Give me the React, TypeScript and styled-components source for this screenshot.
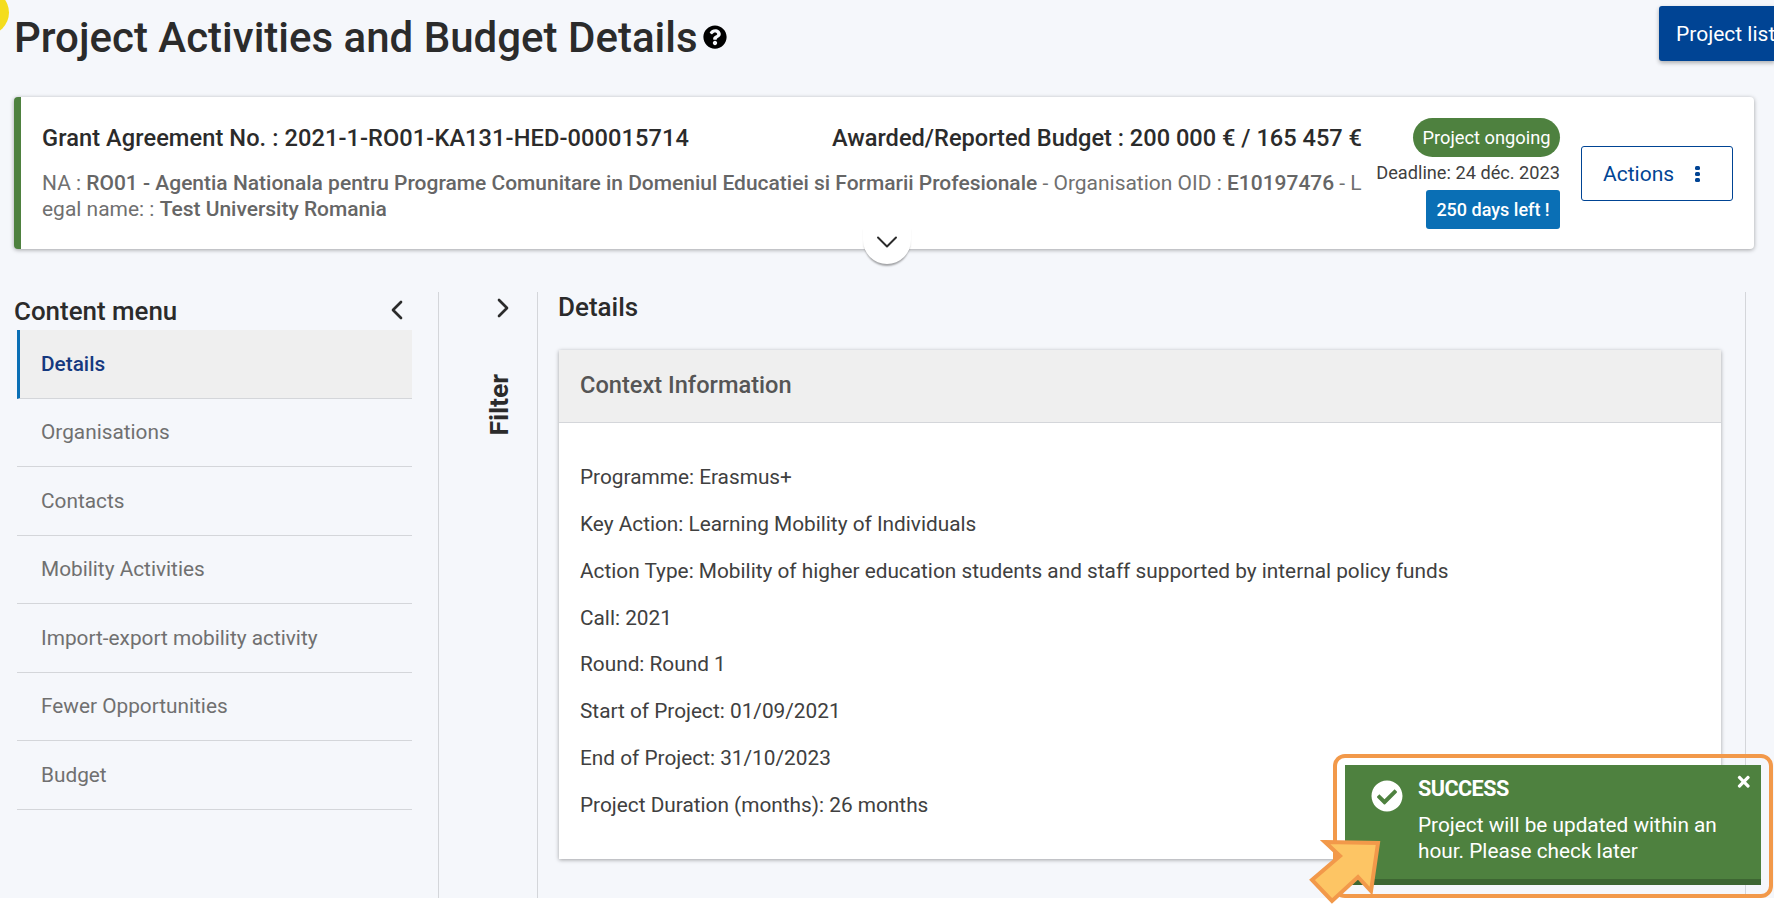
import styled, { createGlobalStyle } from "styled-components";
import { ChevronDown, ChevronLeft, ChevronRight } from "lucide-react";
import { FaCheckCircle, FaQuestionCircle, FaTimes } from "react-icons/fa";

const GlobalStyle = createGlobalStyle`
  html, body {
    margin: 0;
    padding: 0;
    background: #ffffff;
    font-family: Roboto, "Liberation Sans", sans-serif;
    color: #2b2b2b;
  }
  * {
    box-sizing: border-box;
  }
`;

const StyledPage = styled.div`
  position: relative;
  width: 1774px;
  height: 906px;
  overflow: hidden;
`;

const StyledBackground = styled.div`
  height: 898px;
  background: #f5f7fb;
  padding: 0 0 0 14px;
  display: flex;
  flex-direction: column;
`;

const StyledMarker = styled.div`
  position: absolute;
  left: -36px;
  top: -10px;
  width: 45px;
  height: 45px;
  border-radius: 50%;
  background: #f4dd1d;
`;

const StyledHeader = styled.div`
  display: flex;
  align-items: flex-start;
  justify-content: space-between;
  height: 97px;
`;

const StyledTitleRow = styled.div`
  display: flex;
  align-items: center;
  gap: 5px;
  padding-top: 12px;
`;

const StyledTitle = styled.h1`
  margin: 0;
  font-size: 42px;
  line-height: 52px;
  font-weight: 500;
  color: #2b2b2b;
`;

const StyledHelpIcon = styled(FaQuestionCircle)`
  margin-top: -2px;
  font-size: 24px;
  color: #000000;
`;

const StyledProjectListButton = styled.button`
  width: 116px;
  height: 55px;
  margin-top: 6px;
  margin-right: -1px;
  padding: 0 0 0 17px;
  text-align: left;
  border: none;
  border-radius: 3px 0 0 3px;
  background: #004494;
  color: #ffffff;
  font-family: inherit;
  font-size: 21px;
  white-space: nowrap;
  overflow: hidden;
  box-shadow: 0 2px 4px rgba(0, 0, 0, 0.3);
`;

const StyledProjectCard = styled.section`
  position: relative;
  display: flex;
  width: 1740px;
  height: 152px;
  background: #ffffff;
  border-left: 7px solid #4e813f;
  border-radius: 4px;
  box-shadow: 0 1px 4px rgba(0, 0, 0, 0.35);
`;

const StyledCardInfo = styled.div`
  width: 1341px;
  padding: 25px 0 0 21px;
`;

const StyledCardHeading = styled.div`
  display: flex;
  justify-content: space-between;
  font-size: 23.6px;
  line-height: 32px;
  font-weight: 500;
  color: #2b2b2b;
`;

const StyledGrantNumber = styled.span`
  letter-spacing: 0.08px;
`;

const StyledCardText = styled.div`
  margin-top: 17px;
  font-size: 20.97px;
  line-height: 25.5px;
  color: #707070;
  white-space: nowrap;

  b {
    font-weight: 500;
    color: #666666;
  }
`;

const StyledStatusColumn = styled.div`
  display: flex;
  flex-direction: column;
  align-items: flex-end;
  width: 198px;
  padding-top: 21px;
`;

const StyledOngoingBadge = styled.div`
  width: 147px;
  height: 39px;
  border-radius: 20px;
  background: #4e813f;
  color: #ffffff;
  font-size: 18.3px;
  line-height: 39px;
  text-align: center;
`;

const StyledDeadline = styled.div`
  margin-top: 3px;
  font-size: 18.2px;
  line-height: 26px;
  color: #404040;
  white-space: nowrap;
`;

const StyledDaysBadge = styled.div`
  margin-top: 4px;
  width: 134px;
  height: 39px;
  border-radius: 3px;
  background: #0a6fb5;
  color: #ffffff;
  font-size: 18px;
  font-weight: 500;
  line-height: 39px;
  text-align: center;
`;

const StyledActionsButton = styled.button`
  display: flex;
  align-items: center;
  justify-content: space-between;
  width: 152px;
  height: 55px;
  margin: 49px 0 0 21px;
  padding: 0 32px 0 21px;
  background: #ffffff;
  border: 1px solid #004494;
  border-radius: 3px;
  color: #004494;
  font-family: inherit;
  font-size: 21px;
`;

const StyledDots = styled.span`
  display: flex;
  flex-direction: column;
  gap: 2px;

  i {
    display: block;
    width: 5px;
    height: 4px;
    border-radius: 1.5px;
    background: #004494;
  }
`;

const StyledExpander = styled.div`
  position: absolute;
  left: 842px;
  bottom: -15px;
  display: flex;
  justify-content: center;
  width: 48px;
  height: 38px;
  background: #ffffff;
  border-radius: 0 0 24px 24px;
  box-shadow: 0 3px 2px -1px rgba(0, 0, 0, 0.35);
  color: #2b2b2b;

  svg {
    flex-shrink: 0;
    margin-top: -2px;
  }
`;

const StyledBody = styled.div`
  display: flex;
  flex: 1;
  margin-top: 43px;
`;

const StyledSidebar = styled.aside`
  width: 425px;
  padding-right: 26px;
  border-right: 1px solid #d4d6da;
`;

const StyledSidebarHeader = styled.div`
  display: flex;
  align-items: center;
  justify-content: space-between;
  height: 38px;
  font-size: 25.9px;
  font-weight: 500;
  color: #2b2b2b;

  svg {
    margin-right: -1px;
    margin-top: -2px;
  }
`;

const StyledMenu = styled.nav`
  margin-left: 3px;
`;

const StyledMenuItem = styled.div<{ active?: boolean }>`
  display: flex;
  align-items: center;
  height: 68.5px;
  padding-left: ${(props) => (props.active ? "21px" : "24px")};
  font-size: 20.8px;
  font-weight: ${(props) => (props.active ? 500 : 400)};
  color: ${(props) => (props.active ? "#15397f" : "#707070")};
  background: ${(props) => (props.active ? "#efefef" : "transparent")};
  border-left: ${(props) => (props.active ? "3px solid #0a6fb5" : "none")};
  border-bottom: 1px solid #d4d6da;
`;

const StyledFilterColumn = styled.div`
  display: flex;
  flex-direction: column;
  align-items: center;
  width: 99px;
  padding-left: 14px;
  border-right: 1px solid #d4d6da;
`;

const StyledFilterToggle = styled.div`
  height: 32px;
  display: flex;
  align-items: center;
  margin-left: 16px;
  color: #2b2b2b;
`;

const StyledFilterLabel = styled.div`
  margin: 50px 0 0 6px;
  writing-mode: vertical-rl;
  transform: rotate(180deg);
  font-size: 26.5px;
  font-weight: 700;
  color: #2b2b2b;
`;

const StyledContent = styled.main`
  width: 1208px;
  padding: 0 0 0 21px;
  border-right: 1px solid #d4d6da;
`;

const StyledContentTitle = styled.h2`
  margin: 0 0 0 -1px;
  height: 30px;
  font-size: 26px;
  line-height: 30px;
  font-weight: 500;
  color: #2b2b2b;
`;

const StyledPanel = styled.section`
  margin-top: 28px;
  width: 1162px;
  height: 509px;
  background: #ffffff;
  box-shadow: 0 1px 4px rgba(0, 0, 0, 0.35);
`;

const StyledPanelHeader = styled.div`
  display: flex;
  align-items: center;
  height: 73px;
  padding: 0 0 2px 21px;
  background: #efefef;
  border-bottom: 1px solid #d4d6da;
  font-size: 23.6px;
  font-weight: 500;
  color: #555555;
`;

const StyledPanelBody = styled.div`
  padding: 31px 21px 0;
`;

const StyledLine = styled.p`
  margin: 0;
  font-size: 20.8px;
  line-height: 46.86px;
  color: #404040;
`;

const StyledToastFrame = styled.div`
  position: absolute;
  left: 1333px;
  top: 754px;
  width: 440px;
  height: 144px;
  padding: 7px 8px 9px 8px;
  border: 4px solid #f2994a;
  border-radius: 12px;
`;

const StyledToast = styled.div`
  position: relative;
  display: flex;
  gap: 15px;
  height: 100%;
  padding: 11px 0 0 26px;
  background: #4e813f;
  border-bottom: 6px solid #3d6632;
  color: #ffffff;
`;

const StyledToastIcon = styled(FaCheckCircle)`
  flex-shrink: 0;
  margin-top: 4px;
  font-size: 32px;
  color: #ffffff;
`;

const StyledToastTitle = styled.div`
  font-size: 21.6px;
  line-height: 26px;
  font-weight: 700;
  letter-spacing: -0.55px;
`;

const StyledToastMessage = styled.div`
  margin-top: 10px;
  width: 320px;
  font-size: 20.8px;
  line-height: 26px;
`;

const StyledToastClose = styled(FaTimes)`
  position: absolute;
  top: 8px;
  right: 9px;
  font-size: 17.5px;
  color: #ffffff;
`;

const StyledArrow = styled.svg`
  position: absolute;
  left: 1305px;
  top: 835px;
`;

const menuItems = [
  "Details",
  "Organisations",
  "Contacts",
  "Mobility Activities",
  "Import-export mobility activity",
  "Fewer Opportunities",
  "Budget",
];

const contextLines = [
  "Programme: Erasmus+",
  "Key Action: Learning Mobility of Individuals",
  "Action Type: Mobility of higher education students and staff supported by internal policy funds",
  "Call: 2021",
  "Round: Round 1",
  "Start of Project: 01/09/2021",
  "End of Project: 31/10/2023",
  "Project Duration (months): 26 months",
];

export default function App() {
  return (
    <StyledPage>
      <GlobalStyle />
      <StyledBackground>
        <StyledHeader>
          <StyledTitleRow>
            <StyledTitle>Project Activities and Budget Details</StyledTitle>
            <StyledHelpIcon />
          </StyledTitleRow>
          <StyledProjectListButton>Project list</StyledProjectListButton>
        </StyledHeader>

        <StyledProjectCard>
          <StyledCardInfo>
            <StyledCardHeading>
              <StyledGrantNumber>Grant Agreement No. : 2021-1-RO01-KA131-HED-000015714</StyledGrantNumber>
              <span>Awarded/Reported Budget : 200 000 € / 165 457 €</span>
            </StyledCardHeading>
            <StyledCardText>
              <div>
                NA : <b>RO01 - Agentia Nationala pentru Programe Comunitare in Domeniul Educatiei si Formarii Profesionale</b>{" "}
                - Organisation OID : <b>E10197476</b> - L
              </div>
              <div>
                egal name: : <b>Test University Romania</b>
              </div>
            </StyledCardText>
          </StyledCardInfo>
          <StyledStatusColumn>
            <StyledOngoingBadge>Project ongoing</StyledOngoingBadge>
            <StyledDeadline>Deadline: 24 déc. 2023</StyledDeadline>
            <StyledDaysBadge>250 days left !</StyledDaysBadge>
          </StyledStatusColumn>
          <StyledActionsButton>
            Actions
            <StyledDots>
              <i />
              <i />
              <i />
            </StyledDots>
          </StyledActionsButton>
          <StyledExpander>
            <ChevronDown size={36} strokeWidth={1.3} />
          </StyledExpander>
        </StyledProjectCard>

        <StyledBody>
          <StyledSidebar>
            <StyledSidebarHeader>
              Content menu
              <ChevronLeft size={32} strokeWidth={2} />
            </StyledSidebarHeader>
            <StyledMenu>
              {menuItems.map((item, index) => (
                <StyledMenuItem key={item} active={index === 0}>
                  {item}
                </StyledMenuItem>
              ))}
            </StyledMenu>
          </StyledSidebar>
          <StyledFilterColumn>
            <StyledFilterToggle>
              <ChevronRight size={32} strokeWidth={2} />
            </StyledFilterToggle>
            <StyledFilterLabel>Filter</StyledFilterLabel>
          </StyledFilterColumn>
          <StyledContent>
            <StyledContentTitle>Details</StyledContentTitle>
            <StyledPanel>
              <StyledPanelHeader>Context Information</StyledPanelHeader>
              <StyledPanelBody>
                {contextLines.map((line) => (
                  <StyledLine key={line}>{line}</StyledLine>
                ))}
              </StyledPanelBody>
            </StyledPanel>
          </StyledContent>
        </StyledBody>
      </StyledBackground>

      <StyledMarker />
      <StyledToastFrame>
        <StyledToast>
          <StyledToastIcon />
          <div>
            <StyledToastTitle>SUCCESS</StyledToastTitle>
            <StyledToastMessage>
              Project will be updated within an hour. Please check later
            </StyledToastMessage>
          </div>
          <StyledToastClose />
        </StyledToast>
      </StyledToastFrame>
      <StyledArrow width="76" height="72" viewBox="0 0 76 72">
        <path
          d="M20 7 L73 8 L66 56 L53 42 L27 66 L7 45 L35 21 Z"
          fill="#fdc564"
          stroke="#f2994a"
          strokeWidth="4"
        />
      </StyledArrow>
    </StyledPage>
  );
}
